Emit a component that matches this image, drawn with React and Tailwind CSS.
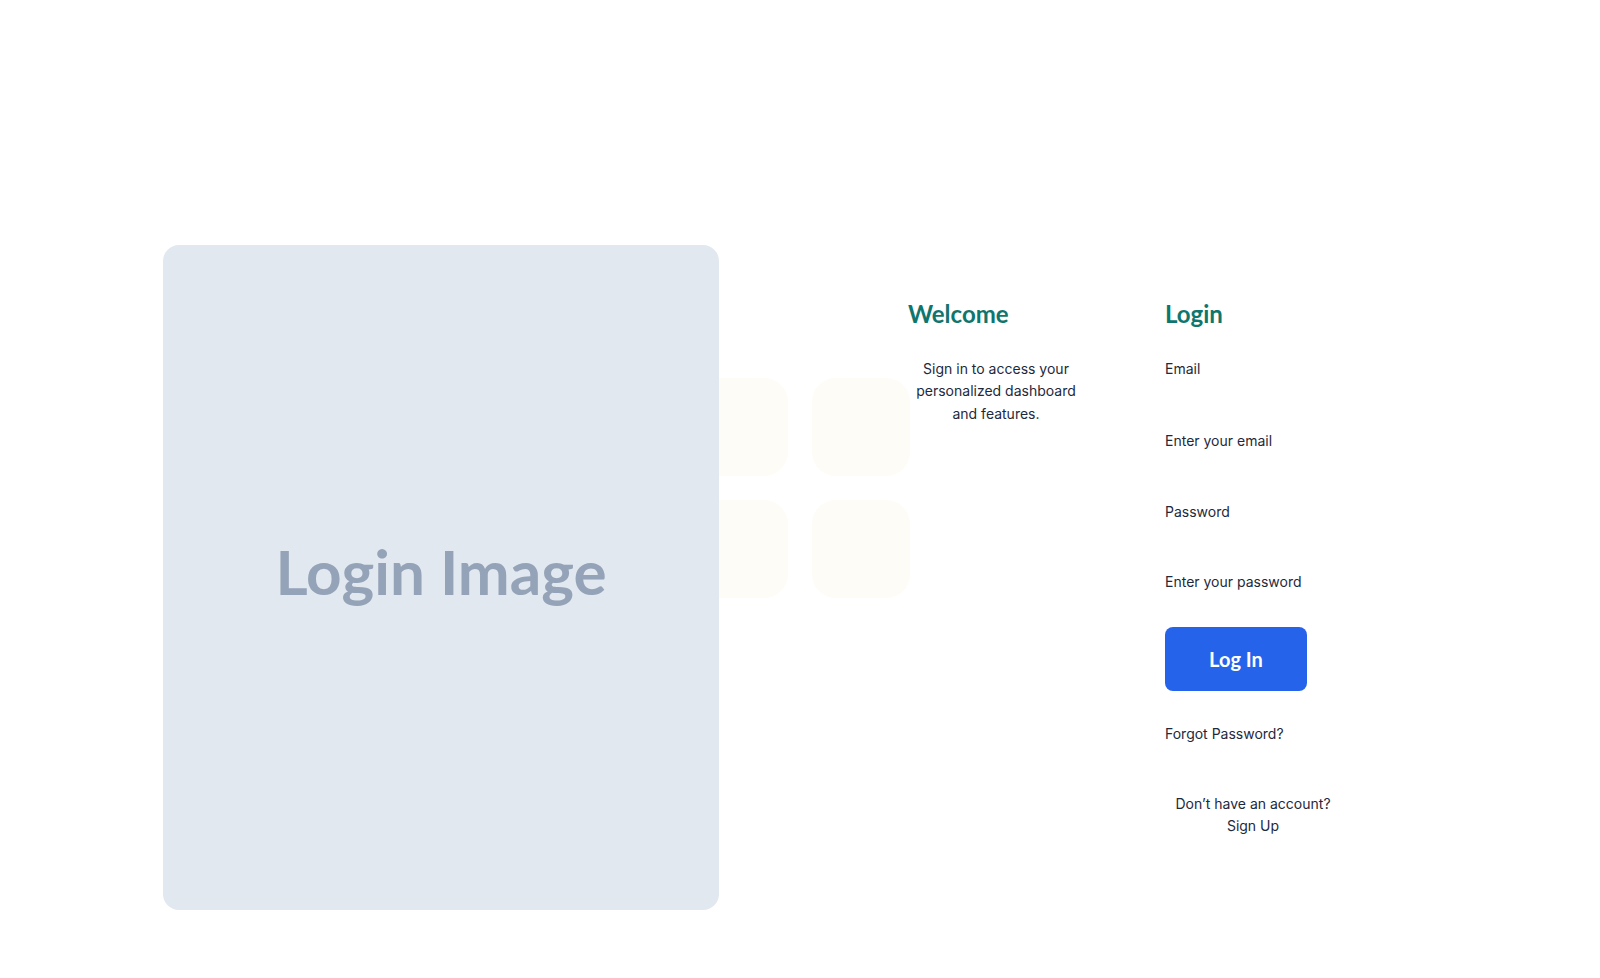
export default function App() {
  return (
    <div className="relative min-h-screen w-full bg-white" style={{ fontFamily: "Inter, 'Noto Sans', sans-serif" }}>
      <div className="relative flex items-start pl-[163px] pt-[245px]">
        <div className="pointer-events-none absolute left-[690px] top-[378px] grid grid-cols-2 gap-[24px]">
          <div className="h-[98px] w-[98px] rounded-3xl bg-[#fdfcf7]" />
          <div className="h-[98px] w-[98px] rounded-3xl bg-[#fdfcf7]" />
          <div className="h-[98px] w-[98px] rounded-3xl bg-[#fdfcf7]" />
          <div className="h-[98px] w-[98px] rounded-3xl bg-[#fdfcf7]" />
        </div>
        <div className="relative z-10 flex h-[665px] w-[556px] items-center justify-center rounded-2xl bg-[#e2e8f0]">
          <span className="mb-[14px] text-[62px] font-bold leading-none text-[#94a3b8]" style={{ fontFamily: "Lato, sans-serif" }}>Login Image</span>
        </div>
        <div className="relative z-10 ml-[189px] mt-[53px] flex gap-[81px] text-[#1e293b]">
          <div className="flex w-[176px] flex-col">
            <h2 className="text-2xl font-bold leading-8 text-[#0f766e]" style={{ fontFamily: "Lato, sans-serif" }}>Welcome</h2>
            <p className="mt-[28px] text-center text-[14px] leading-[22.4px]">
              Sign in to access your personalized dashboard and features.
            </p>
          </div>
          <div className="flex w-[176px] flex-col">
            <h2 className="text-2xl font-bold leading-8 text-[#0f766e]" style={{ fontFamily: "Lato, sans-serif" }}>Login</h2>
            <label className="mt-[29px] text-sm leading-5">Email</label>
            <div className="mt-[52px] text-sm leading-5">Enter your email</div>
            <label className="mt-[51px] text-sm leading-5">Password</label>
            <div className="mt-[50px] text-sm leading-5">Enter your password</div>
            <button className="mt-[35px] flex h-[64px] w-[142px] items-center justify-center rounded-lg bg-[#2563eb] text-xl font-bold text-white" style={{ fontFamily: "Lato, sans-serif" }}>
              Log In
            </button>
            <div className="mt-[33px] text-sm leading-5">Forgot Password?</div>
            <p className="mt-[49px] text-center text-sm leading-[22px]">
              Don’t have an account?
              <br />
              Sign Up
            </p>
          </div>
        </div>
      </div>
    </div>
  );
}
